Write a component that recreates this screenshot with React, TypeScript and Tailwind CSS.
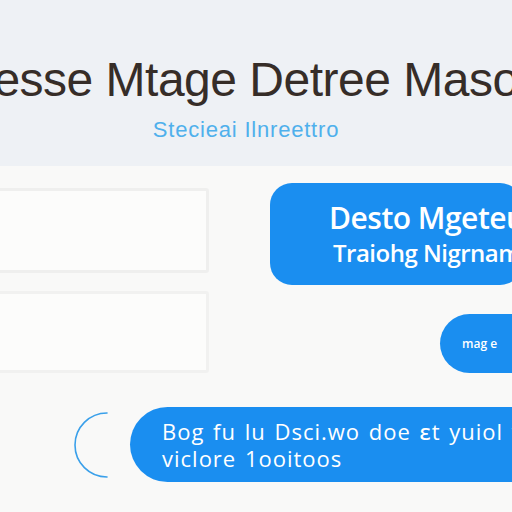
export default function App() {
  return (
    <div className="w-[512px] h-[512px] overflow-hidden bg-[#f9f9f8] flex flex-col">
      <header className="h-[166px] shrink-0 bg-[#eef1f5] flex flex-col items-center overflow-hidden whitespace-nowrap">
        <h1
          className="pt-[56px] text-[48px] leading-none text-[#362d28] tracking-[-0.5px]"
          style={{ fontFamily: '"Liberation Sans", Arial, sans-serif' }}
        >
          esse Mtage Detree Maso
        </h1>
        <p
          className="mt-[15px] mr-[20px] text-[22px] leading-none text-[#4fb0ec] tracking-[0.8px]"
          style={{ fontFamily: '"Liberation Sans", Arial, sans-serif' }}
        >
          Stecieai Ilnreettro
        </p>
      </header>

      <main
        className="flex flex-col"
        style={{ fontFamily: '"Open Sans", "Noto Sans", sans-serif' }}
      >
        <div className="flex items-start mt-[17px]">
          <div className="flex flex-col gap-[18px] mt-[5px] -ml-[4px] w-[213px] shrink-0">
            <div className="h-[85px] rounded-[3px] border-[3px] border-[#efefee] bg-[#fcfcfb]" />
            <div className="h-[82px] rounded-[3px] border-[3px] border-[#f1f1f0] bg-[#fcfcfb]" />
          </div>
          <div className="flex-1 flex flex-col items-end ml-[61px] -mr-[10px] min-w-0">
            <div className="w-full h-[102px] rounded-[22px] bg-[#1a8ef0] text-white flex flex-col justify-center pl-[59px] whitespace-nowrap overflow-hidden">
              <div className="text-[30px] leading-[38px] font-semibold tracking-[-0.5px]">
                Desto Mgeteu
              </div>
              <div className="text-[24px] leading-[32px] font-semibold pl-[4px] tracking-[-0.5px]">
                Traiohg Nigrnam
              </div>
            </div>
            <div className="mt-[29px] w-[82px] h-[59px] rounded-l-full bg-[#1a8ef0] text-white flex items-center pl-[22px] whitespace-nowrap overflow-hidden">
              <span className="text-[12px] font-semibold">mag e</span>
            </div>
          </div>
        </div>

        <div className="flex items-center mt-[34px]">
          <svg width="36" height="68" viewBox="0 0 36 68" className="ml-[74px] shrink-0">
            <path
              d="M33 2 A32 32 0 0 0 33 66"
              fill="none"
              stroke="#3aa0ea"
              strokeWidth="1.6"
              strokeLinecap="round"
            />
          </svg>
          <div className="ml-[20px] -mr-[12px] flex-1 h-[75px] rounded-l-[38px] bg-[#1a8ef0] text-white flex flex-col justify-center pl-[32px] whitespace-nowrap overflow-hidden">
            <div
              className="text-[22px] leading-[27px] font-medium tracking-[1px]"
              style={{ wordSpacing: "2px" }}
            >
              Bog fu lu Dsci.wo doe ɛt yuiol v
            </div>
            <div
              className="text-[22px] leading-[27px] font-medium tracking-[1px]"
              style={{ wordSpacing: "2px" }}
            >
              viclore 1ooitoos
            </div>
          </div>
        </div>
      </main>
    </div>
  );
}
